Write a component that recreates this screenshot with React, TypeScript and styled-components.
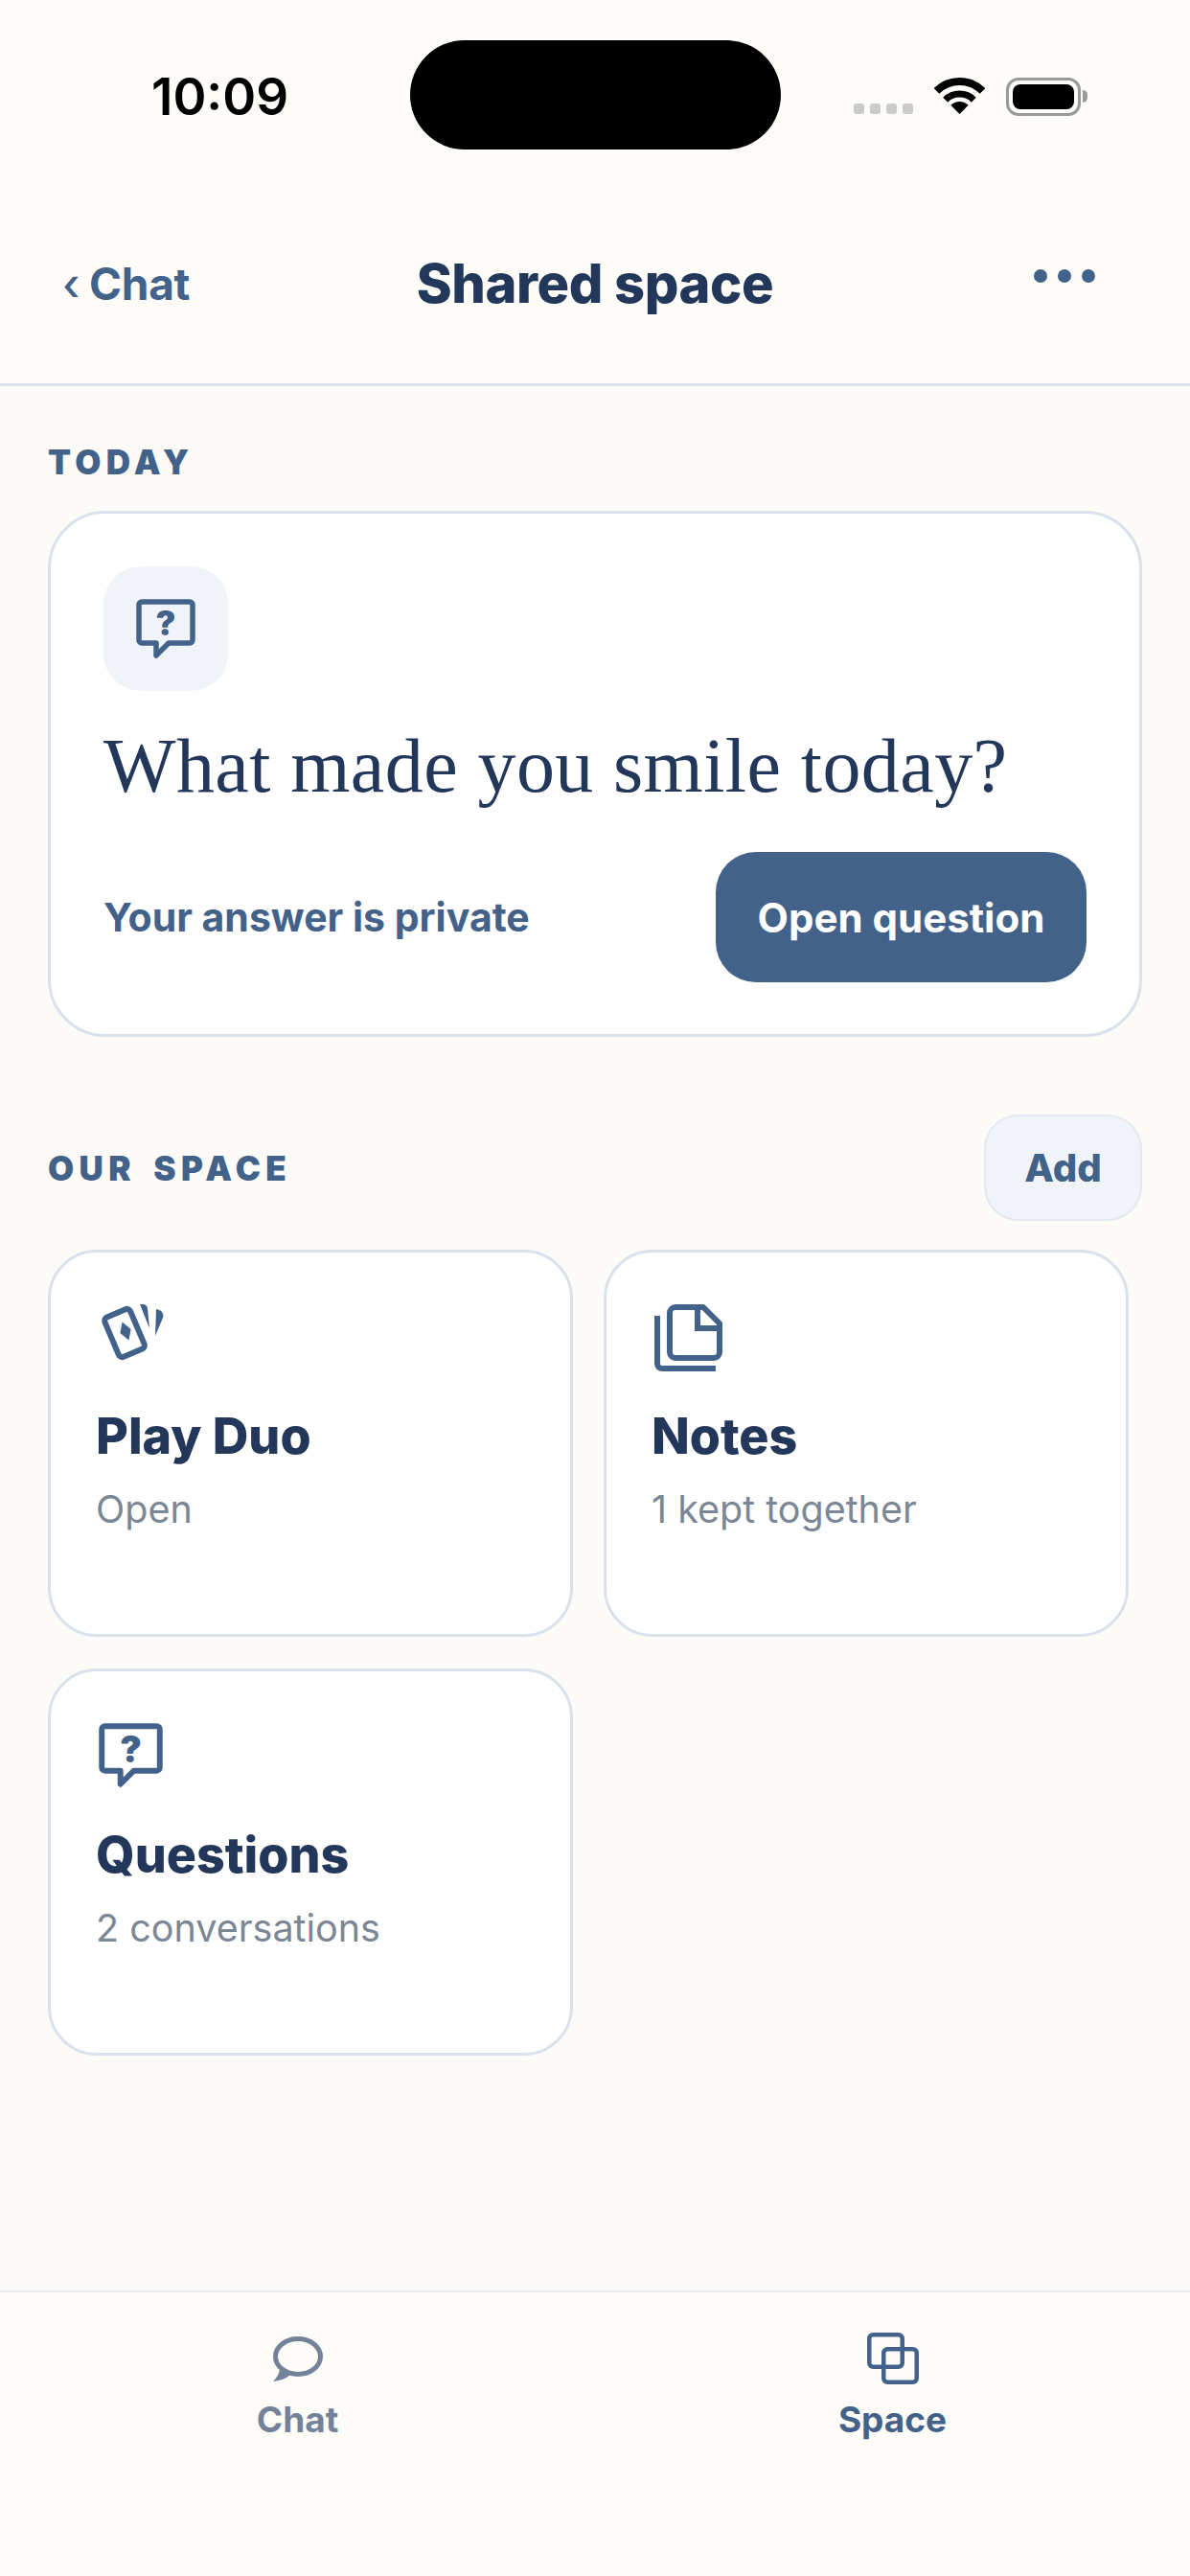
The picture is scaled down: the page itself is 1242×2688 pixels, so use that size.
import React from 'react';
import styled, { createGlobalStyle } from 'styled-components';

const navy = '#22375a';
const blue = '#43628a';
const line = '#d9e2ec';
const tint = '#f0f4f8';
const muted = '#7b8794';

const GlobalStyle = createGlobalStyle`
  html, body {
    margin: 0;
    padding: 0;
    background: #fcfbf7;
  }
  * {
    box-sizing: border-box;
  }
`;

const Screen = styled.div`
  display: flex;
  flex-direction: column;
  width: 1242px;
  height: 2688px;
  overflow: hidden;
  background: #fcfbf7;
  font-family: Inter, 'Liberation Sans', sans-serif;
`;

const Header = styled.header`
  flex: none;
  height: 403px;
  padding-top: 42px;
  background: #fdfcf8;
  border-bottom: 3px solid ${line};
`;

const StatusBar = styled.div`
  display: grid;
  grid-template-columns: 428px 387px 1fr;
  height: 114px;
`;

const Time = styled.div`
  padding: 28px 0 0 158px;
  font-size: 53px;
  line-height: 62px;
  font-weight: 600;
  color: #000;
`;

const Island = styled.div`
  background: #000;
  border-radius: 57px;
`;

const StatusIcons = styled.div`
  display: flex;
  align-items: flex-start;
  padding: 39px 0 0 76px;
`;

const SignalDots = styled.div`
  display: flex;
  gap: 6.5px;
  margin-top: 27px;
  margin-right: 22px;
`;

const SignalDot = styled.span`
  width: 10.5px;
  height: 11px;
  border-radius: 3px;
  background: #cbcbc7;
`;

const Battery = styled.div`
  position: relative;
  width: 78px;
  height: 40px;
  margin-left: 22px;
  padding: 4px;
  border: 3px solid #9a9a96;
  border-radius: 13px;

  &::before {
    content: '';
    display: block;
    height: 100%;
    border-radius: 8px;
    background: #000;
  }

  &::after {
    content: '';
    position: absolute;
    top: 10px;
    right: -10px;
    width: 5px;
    height: 13px;
    border-radius: 0 5px 5px 0;
    background: #9a9a96;
  }
`;

const NavBar = styled.nav`
  display: grid;
  grid-template-columns: 1fr auto 1fr;
  align-items: center;
  height: 70px;
  margin-top: 105px;
  padding: 0 65px;
`;

const BackLink = styled.a`
  font-size: 46px;
  font-weight: 700;
  letter-spacing: -0.3px;
  line-height: 54px;
  color: ${blue};
`;

const Chevron = styled.span`
  margin-right: 10px;
  font-weight: 500;
`;

const Title = styled.h1`
  margin: 0;
  font-size: 56px;
  line-height: 66px;
  font-weight: 800;
  letter-spacing: -0.4px;
  color: ${navy};
`;

const MoreButton = styled.div`
  display: flex;
  justify-content: flex-end;
  gap: 11px;
  margin: 0 34px 16px 0;
`;

const MoreDot = styled.span`
  width: 14px;
  height: 14px;
  border-radius: 50%;
  background: ${blue};
`;

const Main = styled.main`
  flex: 1;
  padding: 0 50px;
`;

const SectionLabel = styled.h2`
  margin: 0;
  font-size: 35px;
  line-height: 40px;
  font-weight: 900;
  letter-spacing: 5.4px;
  word-spacing: 6px;
  color: ${blue};
`;

const TodayLabel = styled(SectionLabel)`
  padding: 59px 0 31px;
`;

const QuestionCard = styled.section`
  height: 549px;
  padding: 55px 55px 0;
  background: #fff;
  border: 3px solid ${line};
  border-radius: 60px;
`;

const IconTile = styled.div`
  display: flex;
  align-items: center;
  justify-content: center;
  width: 130px;
  height: 130px;
  border-radius: 39px;
  background: ${tint};
`;

const QuestionText = styled.p`
  margin: 30px 0 0;
  font-family: 'Liberation Serif', serif;
  font-size: 80px;
  line-height: 96px;
  letter-spacing: 0.4px;
  white-space: nowrap;
  color: ${navy};
`;

const CardFooter = styled.div`
  display: flex;
  align-items: center;
  justify-content: space-between;
  margin-top: 42px;
`;

const Hint = styled.span`
  font-size: 41px;
  font-weight: 700;
  color: ${blue};
`;

const PrimaryButton = styled.button`
  width: 387px;
  height: 136px;
  border: 0;
  border-radius: 42px;
  background: ${blue};
  color: #fff;
  font: 700 42px Inter, 'Liberation Sans', sans-serif;
`;

const SpaceHeader = styled.div`
  display: flex;
  align-items: center;
  justify-content: space-between;
  height: 111px;
  margin-top: 81px;
`;

const AddButton = styled.button`
  width: 165px;
  height: 111px;
  border: 2px solid #e3e9f0;
  border-radius: 36px;
  background: ${tint};
  color: ${blue};
  font: 800 40px Inter, 'Liberation Sans', sans-serif;
`;

const Tiles = styled.div`
  display: flex;
  flex-wrap: wrap;
  gap: 33px 32px;
  margin-top: 30px;
`;

const Tile = styled.article`
  width: 548px;
  height: 404px;
  padding: 54px 0 0 47px;
  background: #fff;
  border: 3px solid ${line};
  border-radius: 51px;
`;

const TileIcon = styled.div`
  height: 72px;
  margin-left: 3px;
`;

const TileTitle = styled.h3`
  margin: 35px 0 0;
  font-size: 52px;
  line-height: 62px;
  font-weight: 800;
  color: ${navy};
`;

const TileMeta = styled.p`
  margin: 21px 0 0;
  font-size: 39.5px;
  line-height: 48px;
  color: ${muted};
`;

const TabBar = styled.footer`
  flex: none;
  display: grid;
  grid-template-columns: 1fr 1fr;
  height: 298px;
  padding-top: 42px;
  background: #fdfcf8;
  border-top: 2px solid #e9ecf0;
`;

const Tab = styled.div<{ $active?: boolean }>`
  display: flex;
  flex-direction: column;
  align-items: center;
  color: ${(p) => (p.$active ? blue : '#748299')};
`;

const TabIcon = styled.div`
  display: flex;
  align-items: center;
  height: 54px;
`;

const TabLabel = styled.span`
  margin-top: 15px;
  font-size: 37px;
  line-height: 44px;
  font-weight: 700;
`;

function QuestionIcon({ size = 62 }: { size?: number }) {
  return (
    <svg width={size} height={size} viewBox="0 0 62 62" fill="none">
      <path
        d="M6 3H56a3 3 0 0 1 3 3V43a3 3 0 0 1-3 3H34L21 59V46H6a3 3 0 0 1-3-3V6a3 3 0 0 1 3-3Z"
        stroke={blue}
        strokeWidth="5.5"
        strokeLinejoin="round"
      />
      <text x="31" y="38" textAnchor="middle" fontFamily="Inter, sans-serif" fontWeight="900" fontSize="35" fill={blue}>
        ?
      </text>
    </svg>
  );
}

function CardsIcon() {
  return (
    <svg width="68" height="62" viewBox="0 0 68 62" fill={blue}>
      <rect x="12.5" y="7.5" width="29" height="45" rx="4" fill="none" stroke={blue} strokeWidth="6" transform="rotate(-23 27 30)" />
      <polygon points="28,18 34,28 28,38 22,28" transform="rotate(-20 28 28)" />
      <path d="M43 0H46Q50 0 51 4L53 25Z" />
      <path d="M60 5Q66 6 67 10Q68 12 67 14L59 33Z" />
    </svg>
  );
}

function NotesIcon() {
  return (
    <svg width="71" height="70" viewBox="0 0 71 70" fill="none" stroke={blue} strokeWidth="6">
      <path d="M22 3H51L68 20V50a6 6 0 0 1-6 6H22a6 6 0 0 1-6-6V9a6 6 0 0 1 6-6Z" strokeLinejoin="round" />
      <path d="M45 3V25H68" />
      <path d="M3 12V62a5 5 0 0 0 5 5H64" />
    </svg>
  );
}

function ChatTabIcon() {
  return (
    <svg width="52" height="47" viewBox="0 0 52 47" fill="none">
      <ellipse cx="26" cy="21" rx="23.5" ry="18.5" stroke="currentColor" strokeWidth="5" />
      <path d="M7 33C7 39 3 44 0 47C8 46 14 44 19 39Z" fill="currentColor" />
    </svg>
  );
}

function SpaceTabIcon() {
  return (
    <svg width="54" height="54" viewBox="0 0 54 54" fill="none" stroke="currentColor" strokeWidth="4.5">
      <rect x="2.25" y="2.25" width="34.5" height="33.5" rx="4" />
      <rect x="17.25" y="17.25" width="34.5" height="34.5" rx="4" />
    </svg>
  );
}

function WifiIcon() {
  return (
    <svg width="53" height="38" viewBox="0 0 53 38" fill="none" stroke="#000">
      <path d="M2.5 14A34 34 0 0 1 50.5 14" strokeWidth="8" />
      <path d="M11.7 23.2A21 21 0 0 1 41.3 23.2" strokeWidth="7" />
      <path d="M26.5 38L17.3 28.8A13 13 0 0 1 35.7 28.8Z" fill="#000" stroke="none" />
    </svg>
  );
}

const tiles = [
  { title: 'Play Duo', meta: 'Open', icon: <CardsIcon /> },
  { title: 'Notes', meta: '1 kept together', icon: <NotesIcon /> },
  { title: 'Questions', meta: '2 conversations', icon: <QuestionIcon size={67} /> },
];

export default function App() {
  return (
    <Screen>
      <GlobalStyle />
      <Header>
        <StatusBar>
          <Time>10:09</Time>
          <Island />
          <StatusIcons>
            <SignalDots>
              <SignalDot />
              <SignalDot />
              <SignalDot />
              <SignalDot />
            </SignalDots>
            <WifiIcon />
            <Battery />
          </StatusIcons>
        </StatusBar>
        <NavBar>
          <BackLink>
            <Chevron>‹</Chevron>Chat
          </BackLink>
          <Title>Shared space</Title>
          <MoreButton>
            <MoreDot />
            <MoreDot />
            <MoreDot />
          </MoreButton>
        </NavBar>
      </Header>
      <Main>
        <TodayLabel>TODAY</TodayLabel>
        <QuestionCard>
          <IconTile>
            <QuestionIcon />
          </IconTile>
          <QuestionText>What made you smile today?</QuestionText>
          <CardFooter>
            <Hint>Your answer is private</Hint>
            <PrimaryButton>Open question</PrimaryButton>
          </CardFooter>
        </QuestionCard>
        <SpaceHeader>
          <SectionLabel>OUR SPACE</SectionLabel>
          <AddButton>Add</AddButton>
        </SpaceHeader>
        <Tiles>
          {tiles.map((tile) => (
            <Tile key={tile.title}>
              <TileIcon>{tile.icon}</TileIcon>
              <TileTitle>{tile.title}</TileTitle>
              <TileMeta>{tile.meta}</TileMeta>
            </Tile>
          ))}
        </Tiles>
      </Main>
      <TabBar>
        <Tab>
          <TabIcon>
            <ChatTabIcon />
          </TabIcon>
          <TabLabel>Chat</TabLabel>
        </Tab>
        <Tab $active>
          <TabIcon>
            <SpaceTabIcon />
          </TabIcon>
          <TabLabel>Space</TabLabel>
        </Tab>
      </TabBar>
    </Screen>
  );
}
